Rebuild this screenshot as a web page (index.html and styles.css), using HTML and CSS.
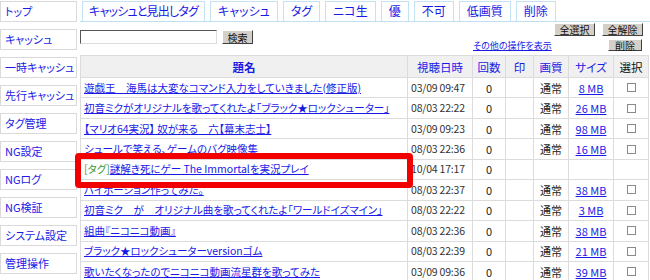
FILE: index.html
```html
<!DOCTYPE html>
<html lang="ja">
<head>
  <meta charset="UTF-8" />
  <title>キャッシュ一覧</title>
  <link rel="stylesheet" href="styles.css">
</head>
<body>
  <div class="page">
    <!-- Left menu -->
    <nav class="side">
      <a class="side-item" href="#">トップ</a>
      <a class="side-item" href="#">キャッシュ</a>
      <a class="side-item" href="#">一時キャッシュ</a>
      <a class="side-item" href="#">先行キャッシュ</a>
      <a class="side-item" href="#">タグ管理</a>
      <a class="side-item" href="#">NG設定</a>
      <a class="side-item" href="#">NGログ</a>
      <a class="side-item" href="#">NG検証</a>
      <a class="side-item" href="#">システム設定</a>
      <a class="side-item" href="#">管理操作</a>
    </nav>

    <div class="main">
      <!-- Tabs -->
      <ul class="tabs">
        <li><a href="#" class="tab-wide">キャッシュと見出しタグ</a></li>
        <li><a href="#">キャッシュ</a></li>
        <li><a href="#">タグ</a></li>
        <li><a href="#">ニコ生</a></li>
        <li><a href="#">優</a></li>
        <li><a href="#">不可</a></li>
        <li><a href="#">低画質</a></li>
        <li><a href="#">削除</a></li>
      </ul>

      <!-- Search & operations -->
      <div class="toolbar">
        <form class="search">
          <input type="text" class="search-input">
          <button type="button" class="btn btn-search">検索</button>
        </form>
        <div class="ops">
          <div class="ops-row">
            <button type="button" class="btn btn-all">全選択</button>
            <button type="button" class="btn btn-none">全解除</button>
          </div>
          <div class="ops-row ops-row2">
            <a href="#" class="ops-link">その他の操作を表示</a>
            <button type="button" class="btn btn-del">削除</button>
          </div>
        </div>
      </div>

      <!-- Cache list -->
      <table class="list">
        <colgroup>
          <col class="c-title"><col class="c-date"><col class="c-count"><col class="c-mark">
          <col class="c-quality"><col class="c-size"><col class="c-select">
        </colgroup>
        <thead>
          <tr>
            <th class="th-title"><a href="#">題名</a></th>
            <th><a href="#">視聴日時</a></th>
            <th><a href="#">回数</a></th>
            <th><a href="#">印</a></th>
            <th><a href="#">画質</a></th>
            <th><a href="#">サイズ</a></th>
            <th class="th-plain">選択</th>
          </tr>
        </thead>
        <tbody>
          <tr>
            <td class="title"><a href="#">遊戯王　海馬は大変なコマンド入力をしていきました(修正版)</a></td>
            <td class="date">03/09 09:47</td><td class="num">0</td><td></td>
            <td class="num">通常</td><td class="num"><a href="#">8 MB</a></td>
            <td class="num"><input type="checkbox" class="check"></td>
          </tr>
          <tr>
            <td class="title"><a href="#">初音ミクがオリジナルを歌ってくれたよ「ブラック★ロックシューター」</a></td>
            <td class="date">08/03 22:22</td><td class="num">0</td><td></td>
            <td class="num">通常</td><td class="num"><a href="#">26 MB</a></td>
            <td class="num"><input type="checkbox" class="check"></td>
          </tr>
          <tr>
            <td class="title"><a href="#">【マリオ64実況】 奴が来る　六【幕末志士】</a></td>
            <td class="date">03/09 09:23</td><td class="num">0</td><td></td>
            <td class="num">通常</td><td class="num"><a href="#">98 MB</a></td>
            <td class="num"><input type="checkbox" class="check"></td>
          </tr>
          <tr>
            <td class="title"><a href="#">シュールで笑える、ゲームのバグ映像集</a></td>
            <td class="date">08/03 22:36</td><td class="num">0</td><td></td>
            <td class="num">通常</td><td class="num"><a href="#">16 MB</a></td>
            <td class="num"><input type="checkbox" class="check"></td>
          </tr>
          <tr>
            <td class="title"><span class="tag">[タグ]</span><a href="#">謎解き死にゲー The Immortalを実況プレイ</a></td>
            <td class="date">10/04 17:17</td><td class="num">0</td><td></td>
            <td></td><td></td><td></td>
          </tr>
          <tr>
            <td class="title"><a href="#">ハイポーション作ってみた。</a></td>
            <td class="date">08/03 22:37</td><td class="num">0</td><td></td>
            <td class="num">通常</td><td class="num"><a href="#">38 MB</a></td>
            <td class="num"><input type="checkbox" class="check"></td>
          </tr>
          <tr>
            <td class="title"><a href="#">初音ミク　が　オリジナル曲を歌ってくれたよ「ワールドイズマイン」</a></td>
            <td class="date">08/03 22:22</td><td class="num">0</td><td></td>
            <td class="num">通常</td><td class="num"><a href="#">3 MB</a></td>
            <td class="num"><input type="checkbox" class="check"></td>
          </tr>
          <tr>
            <td class="title"><a href="#">組曲『ニコニコ動画』</a></td>
            <td class="date">08/03 22:36</td><td class="num">0</td><td></td>
            <td class="num">通常</td><td class="num"><a href="#">38 MB</a></td>
            <td class="num"><input type="checkbox" class="check"></td>
          </tr>
          <tr>
            <td class="title"><a href="#">ブラック★ロックシューターversionゴム</a></td>
            <td class="date">08/03 22:39</td><td class="num">0</td><td></td>
            <td class="num">通常</td><td class="num"><a href="#">21 MB</a></td>
            <td class="num"><input type="checkbox" class="check"></td>
          </tr>
          <tr>
            <td class="title"><a href="#">歌いたくなったのでニコニコ動画流星群を歌ってみた</a></td>
            <td class="date">03/09 09:36</td><td class="num">0</td><td></td>
            <td class="num">通常</td><td class="num"><a href="#">39 MB</a></td>
            <td class="num"><input type="checkbox" class="check"></td>
          </tr>
        </tbody>
      </table>

      <!-- Highlight box drawn over the tag row -->
      <div class="mark"></div>
    </div>
  </div>
</body>
</html>
```

FILE: styles.css
```css
/* Base */
* {
  box-sizing: border-box;
  margin: 0;
  padding: 0;
}

body {
  font-family: "Noto Sans CJK JP", sans-serif;
  font-size: 11px;
  font-feature-settings: "palt";
  color: #222;
  background: #fff;
  overflow: hidden;
}

a {
  color: #1a1ae6;
}

.page {
  display: flex;
  gap: 3px;
  width: 650px;
  height: 280px;
  overflow: hidden;
}

/* Left menu */
.side {
  display: flex;
  flex-direction: column;
  gap: 7px;
  width: 77px;
  flex-shrink: 0;
  padding-top: 1px;
}

.side-item {
  display: block;
  height: 21px;
  line-height: 19px;
  padding-left: 4px;
  border: 1px solid #dadada;
  text-decoration: none;
  white-space: nowrap;
  overflow: hidden;
}

/* Main area */
.main {
  position: relative;
  flex: 1;
}

/* Tabs */
.tabs {
  display: flex;
  gap: 5px;
  list-style: none;
  height: 22px;
  padding: 1px 0 0 2px;
  border-bottom: 1px solid #bfe0f2;
}

.tabs a {
  display: block;
  height: 20px;
  line-height: 18px;
  padding: 0 7px;
  border: 1px solid #c3e2f3;
  border-bottom: none;
  text-decoration: none;
  background: #fff;
  font-size: 12px;
}

.tabs .tab-wide {
  padding: 0 6px;
  letter-spacing: -0.8px;
}

/* Toolbar */
.toolbar {
  display: flex;
  justify-content: space-between;
  height: 33px;
}

.search {
  display: flex;
  gap: 5px;
  margin-top: 8px;
  height: 14px;
}

.search-input {
  width: 137px;
  height: 14px;
  border: 1px solid;
  border-color: #555 #ddd #ddd #555;
}

.btn {
  font-family: "Noto Sans CJK JP", sans-serif;
  font-feature-settings: "palt";
  font-size: 10px;
  line-height: 11px;
  color: #111;
  background: #d4d0c8;
  border: 1px solid;
  border-color: #fff #404040 #404040 #fff;
}

.btn-search {
  width: 31px;
  height: 14px;
}

.ops {
  display: flex;
  flex-direction: column;
  gap: 2px;
  width: 170px;
  margin-top: 1px;
  margin-right: 7px;
}

.ops-row {
  display: flex;
  justify-content: flex-end;
  gap: 7px;
}

.ops-row2 {
  justify-content: space-between;
  align-items: center;
  padding-right: 1px;
}

.btn-all,
.btn-none {
  width: 41px;
  height: 13px;
}

.btn-del {
  width: 34px;
  height: 12px;
}

.ops-link {
  font-size: 9px;
  line-height: 12px;
  margin-top: 2px;
}

/* List table */
.list {
  width: 568px;
  table-layout: fixed;
  border-collapse: collapse;
}

.c-title { width: 327px; }
.c-date { width: 65px; }
.c-count { width: 33px; }
.c-mark { width: 28px; }
.c-quality { width: 35px; }
.c-size { width: 45px; }
.c-select { width: 35px; }

.list th {
  height: 22px;
  background: #f0f0f0;
  border: 1px solid #dcdcdc;
  font-weight: normal;
  font-size: 11.5px;
  text-align: center;
}

.list th a {
  text-decoration: none;
}

.list .th-title a {
  font-weight: bold;
}

.list .th-plain {
  color: #111;
}

.list td {
  height: 20.45px;
  padding: 0 3px;
  border: 1px solid #dcdcdc;
  line-height: 14px;
  white-space: nowrap;
  overflow: hidden;
}

.list .title {
  font-size: 10.5px;
}

.list .date {
  color: #333;
  font-size: 10.5px;
  letter-spacing: -0.2px;
}

.list .num {
  text-align: center;
  color: #222;
}

.tag {
  color: #3a9a3a;
}

.check {
  appearance: none;
  display: block;
  margin: 0 auto;
  width: 9px;
  height: 9px;
  border: 1px solid #8a8a8a;
  background: #fff;
}

/* Red highlight frame over the tag row */
.mark {
  position: absolute;
  left: -5px;
  top: 153px;
  width: 338px;
  height: 35px;
  border: 6px solid #f20000;
  border-radius: 4px;
  pointer-events: none;
}
```
